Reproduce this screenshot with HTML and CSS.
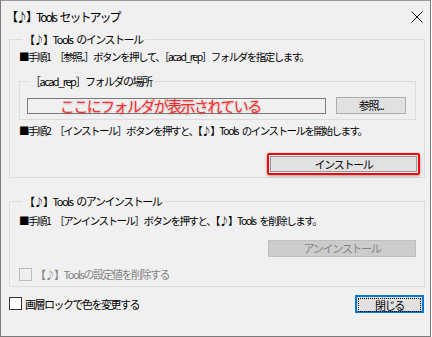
FILE: index.html
```html
<!DOCTYPE html>
<html>
<head>
    <title>【♪】Tools セットアップ</title>
    <link rel="stylesheet" href="styles.css">
</head>
<body>
    <div class="window">
        <div class="titlebar">
            <span class="title">【♪】Tools&nbsp;セットアップ</span>
            <svg class="close" width="12" height="12" viewBox="0 0 12 12">
                <path d="M0.5 0.5 L11.5 11.5 M11.5 0.5 L0.5 11.5" stroke="#111" stroke-width="1" fill="none"/>
            </svg>
        </div>

        <fieldset class="group install">
            <legend>【♪】Tools&nbsp;のインストール</legend>
            <p class="step">■手順1 ［参照..］ボタンを押して、［acad_rep］フォルダを指定します。</p>

            <fieldset class="group folder">
                <legend>［acad_rep］フォルダの場所</legend>
                <div class="folder-row">
                    <div class="textbox"><span class="note">ここにフォルダが表示されている</span></div>
                    <button class="btn browse">参照...</button>
                </div>
            </fieldset>

            <p class="step">■手順2 ［インストール］ボタンを押すと、【♪】Tools&nbsp;のインストールを開始します。</p>
            <div class="btn-row">
                <div class="highlight">
                    <button class="btn wide">インストール</button>
                </div>
            </div>
        </fieldset>

        <fieldset class="group uninstall">
            <legend>【♪】Tools&nbsp;のアンインストール</legend>
            <p class="step">■手順1 ［アンインストール］ボタンを押すと、【♪】Tools&nbsp;を削除します。</p>
            <div class="btn-row">
                <button class="btn wide disabled">アンインストール</button>
            </div>
            <label class="check disabled"><span class="box"></span>【♪】Toolsの設定値を削除する</label>
        </fieldset>

        <div class="footer">
            <label class="check"><span class="box"></span>画層ロックで色を変更する</label>
            <button class="btn close-btn"><span class="focus">閉じる</span></button>
        </div>
    </div>
</body>
</html>
```

FILE: styles.css
```css
body { margin: 0; background: #fff; font-family: "Noto Sans CJK JP", "Noto Sans", sans-serif; font-size: 11px; color: #000; }
.window { width: 431px; height: 337px; box-sizing: border-box; background: #f0f0f0; border: 1px solid #7a7a7a; border-top-color: #9a9a9a; }

.titlebar { height: 30px; display: flex; align-items: center; padding: 0 7px 0 5px; }
.title { font-size: 12px; letter-spacing: -2px; word-spacing: 3px; flex: 1; }
.close { margin-top: 1px; }

p { margin: 0; }
.step { font-size: 10.5px; line-height: 14px; letter-spacing: -1.5px; word-spacing: 3px; white-space: nowrap; }

.group { border: 1px solid #dcdcdc; margin: 0; padding: 0; min-width: 0; box-sizing: border-box; }
.group legend { padding: 0 2px; margin-left: 3px; line-height: 14px; letter-spacing: -1.5px; word-spacing: 3px; }

.install { width: 416px; margin: 1px 0 0 8px; padding: 0 0 2px 9px; }
.install > .step:first-of-type { margin-top: 4px; }
.folder { width: 397px; margin: 10px 0 0 0; padding: 0 9px 5px 7px; }
.folder legend { margin-left: 1px; }
.folder-row { display: flex; align-items: center; gap: 10px; margin-top: 9px; height: 17px; }
.textbox { width: 300px; height: 16px; box-sizing: border-box; border: 1px solid #7a7a7a; margin-top: 1px; overflow: visible; white-space: nowrap; }
.note { display: block; padding-left: 32px; margin-top: -2px; font-size: 15px; line-height: 18px; letter-spacing: -1.6px; color: #ff2b2b; text-shadow: 0 1px 2px rgba(90, 90, 90, 0.45); }

.btn { font-family: inherit; font-size: 11px; letter-spacing: -1.3px; background: #e1e1e1; border: 1px solid #adadad; padding: 0; color: #000; height: 17px; line-height: 15px; }
.browse { width: 70px; }
.install > .step:last-of-type { margin-top: 4px; }
.btn-row { display: flex; justify-content: flex-end; }
.install .btn-row { margin-top: 15px; padding-right: 4px; }
.highlight { border: 2px solid #ff0000; border-radius: 2px; padding: 1px; box-shadow: 0 1px 3px rgba(0, 0, 0, 0.35); }
.highlight .btn { width: 147px; height: 16px; display: block; border-color: #9a9a9a; }

.uninstall { width: 416px; margin: 16px 0 0 8px; padding: 0 0 5px 9px; }
.uninstall .step { margin-top: 6px; }
.uninstall .btn-row { margin-top: 12px; padding-right: 8px; }
.wide.disabled { width: 148px; background: #cccccc; border-color: #bfbfbf; color: #838383; }

.check { display: flex; align-items: center; gap: 3px; height: 14px; letter-spacing: -1.5px; }
.box { width: 13px; height: 13px; box-sizing: border-box; border: 1px solid #333; background: #fff; }
.check.disabled { margin-top: 10px; color: #838383; }
.check.disabled .box { border-color: #bcbcbc; background: #f0f0f0; }

.footer { display: flex; align-items: center; justify-content: space-between; margin: 8px 0 0 8px; padding-right: 6px; height: 17px; }
.close-btn { width: 69px; height: 18px; border: 2px solid #0078d7; padding: 1px; }
.focus { display: block; height: 12px; line-height: 12px; border: 1px dotted #000; }
```
